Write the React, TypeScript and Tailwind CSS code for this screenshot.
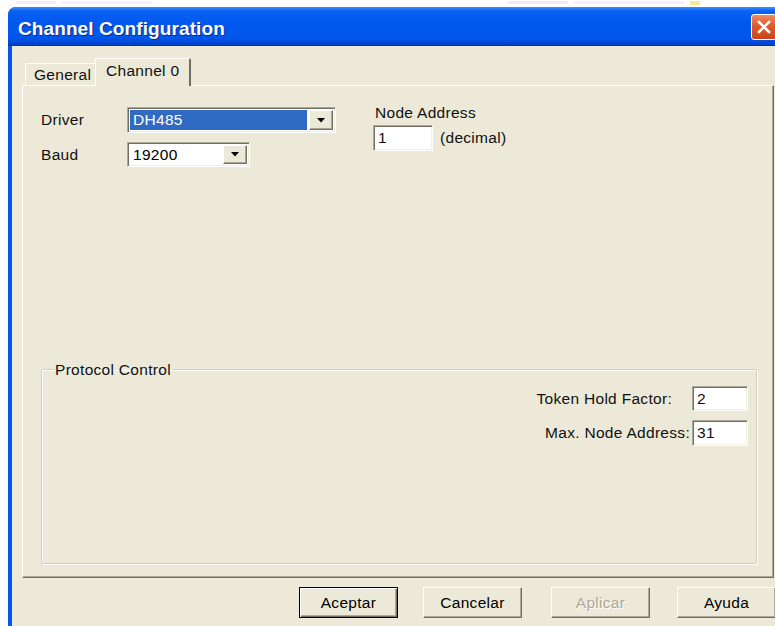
import React from "react";

// classic 3D edges
const sunken =
  "border border-t-[#ACA899] border-l-[#ACA899] border-r-white border-b-white shadow-[inset_1px_1px_0_#716F64,inset_-1px_-1px_0_#F1EFE2] bg-white";
const raised =
  "border border-t-white border-l-white border-r-[#716F64] border-b-[#716F64] shadow-[inset_-1px_-1px_0_#ACA899] bg-[#ECE9D8]";

const DropArrow: React.FC = () => (
  <svg width="8" height="5" viewBox="0 0 8 5">
    <polygon points="0,0 8,0 4,4.5" fill="#000" />
  </svg>
);

interface ComboProps {
  value: string;
  className: string;
  selected?: boolean;
}

const ComboBox: React.FC<ComboProps> = ({ value, className, selected }) => (
  <div className={`${sunken} ${className} flex items-stretch p-[2px]`}>
    <div
      className={`flex flex-1 items-center pl-[3px] ${
        selected ? "mr-[2px] bg-[#316AC5] text-white" : "text-black"
      }`}
    >
      {value}
    </div>
    <div className={`${raised} flex w-[24px] items-center justify-center`}>
      <DropArrow />
    </div>
  </div>
);

const TextBox: React.FC<{ value: string; className: string }> = ({
  value,
  className,
}) => (
  <div className={`${sunken} ${className} flex items-center pl-[4px]`}>
    {value}
  </div>
);

interface ButtonProps {
  label: string;
  className: string;
  isDefault?: boolean;
  disabled?: boolean;
}

const DialogButton: React.FC<ButtonProps> = ({
  label,
  className,
  isDefault,
  disabled,
}) => (
  <button
    type="button"
    className={`flex h-[31px] w-[99px] shrink-0 items-center justify-center ${className} ${
      isDefault
        ? "border border-black bg-[#ECE9D8] shadow-[inset_1px_1px_0_#fff,inset_-1px_-1px_0_#716F64,inset_-2px_-2px_0_#ACA899]"
        : raised
    } ${
      disabled
        ? "text-[#ACA899] [text-shadow:1px_1px_0_#fff]"
        : "text-black"
    }`}
  >
    {label}
  </button>
);

export default function App() {
  return (
    <div className="flex h-[626px] w-[775px] flex-col overflow-hidden bg-white font-['Liberation_Sans',Arial,sans-serif] text-[15.5px] tracking-[0.3px] text-[#111]">
      {/* bits of the window behind */}
      <div className="flex h-[7px] shrink-0 items-start gap-[6px] pl-[16px] pt-[1px]">
        <div className="h-[3px] w-[40px] bg-[#f0f0f0]" />
        <div className="h-[3px] w-[90px] bg-[#f3f3f3]" />
        <div className="ml-[350px] h-[3px] w-[60px] bg-[#eeeeee]" />
        <div className="h-[3px] w-[110px] bg-[#f2f2f2]" />
        <div className="h-[4px] w-[10px] bg-[#f4ea90]" />
      </div>

      <div className="ml-[8px] flex w-[795px] flex-1 shrink-0 flex-col overflow-hidden rounded-t-[8px] bg-[#0A54E6]">
        {/* title bar */}
        <div className="flex h-[39px] shrink-0 items-center bg-[linear-gradient(to_bottom,#3B8FFF_0%,#0A61F2_10%,#0058EE_40%,#0056EA_80%,#0046D2_93%,#0036B4_100%)] pl-[10px] pr-[26px]">
          <span className="mt-[6px] text-[19px] font-bold tracking-[0.1px] text-white [text-shadow:1px_1px_0_#0A2A8C]">
            Channel Configuration
          </span>
          <div className="ml-auto flex h-[26px] w-[26px] items-center justify-center rounded-[3px] border border-white bg-[linear-gradient(to_bottom,#EE8A62_0%,#E05A2C_45%,#CC4416_100%)]">
            <svg width="14" height="14" viewBox="0 0 14 14">
              <path
                d="M2 2 L12 12 M12 2 L2 12"
                stroke="#fff"
                strokeWidth="2.6"
                strokeLinecap="square"
              />
            </svg>
          </div>
        </div>

        {/* dialog body */}
        <div className="ml-[4px] flex flex-1 flex-col bg-[#ECE9D8] pl-[10px] pt-[11px]">
          {/* tabs */}
          <div className="flex h-[28px] items-end">
            <div className="ml-[3px] flex h-[22px] w-[70px] items-center rounded-tl-[2px] border-l border-t border-white pl-[8px]">
              General
            </div>
            <div className="relative z-10 -mb-px flex h-[28px] w-[96px] items-center rounded-t-[2px] border-l border-t border-r-2 border-white border-r-[#716F64] bg-[#ECE9D8] pb-[4px] pl-[10px]">
              Channel 0
            </div>
          </div>

          {/* tab page */}
          <div className="flex h-[493px] w-[752px] flex-col border border-t-white border-l-white border-r-[#716F64] border-b-[#716F64] pl-[18px] pr-[16px] pt-[17px] shadow-[inset_-1px_-1px_0_#ACA899]">
            <div className="flex items-start">
              <div className="mt-[4px] flex flex-col gap-[9px]">
                <div className="flex h-[26px] items-center">
                  <span className="w-[86px]">Driver</span>
                  <ComboBox value="DH485" className="h-[26px] w-[209px]" selected />
                </div>
                <div className="flex h-[25px] items-center">
                  <span className="w-[86px]">Baud</span>
                  <ComboBox value="19200" className="h-[25px] w-[123px]" />
                </div>
              </div>
              <div className="ml-[37px] flex flex-col">
                <span className="ml-[2px] leading-[19px]">Node Address</span>
                <div className="mt-[3px] flex items-center">
                  <TextBox value="1" className="h-[26px] w-[60px]" />
                  <span className="ml-[7px]">(decimal)</span>
                </div>
              </div>
            </div>

            <fieldset className="mb-[13px] mt-auto h-[204px] rounded-[2px] border border-[#D0D0BF] shadow-[inset_1px_1px_0_#fff,1px_1px_0_#fff]">
              <legend className="ml-[12px] px-[1px] leading-[19px]">
                Protocol Control
              </legend>
              <div className="flex flex-col items-end gap-[9px] pr-[8px] pt-[7px]">
                <div className="flex items-center">
                  <span className="mr-[20px]">Token Hold Factor:</span>
                  <TextBox value="2" className="h-[25px] w-[56px]" />
                </div>
                <div className="flex items-center">
                  <span className="mr-[2px]">Max. Node Address:</span>
                  <TextBox value="31" className="h-[26px] w-[56px]" />
                </div>
              </div>
            </fieldset>
          </div>

          {/* dialog buttons */}
          <div className="mt-[9px] flex">
            <DialogButton label="Aceptar" className="ml-[277px]" isDefault />
            <DialogButton label="Cancelar" className="ml-[25px]" />
            <DialogButton label="Aplicar" className="ml-[29px]" disabled />
            <DialogButton label="Ayuda" className="ml-[27px]" />
          </div>
        </div>
      </div>
    </div>
  );
}
